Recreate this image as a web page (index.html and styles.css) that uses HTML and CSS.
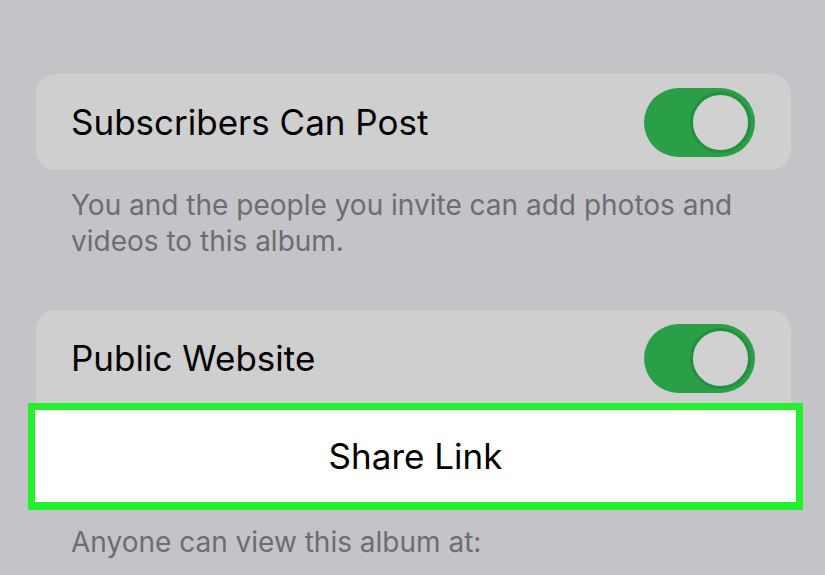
FILE: index.html
```html
<!DOCTYPE html>
<html lang="en">
  <head>
    <meta charset="UTF-8" />
    <meta name="viewport" content="width=device-width, initial-scale=1.0" />
    <title>Shared Album</title>
    <link rel="stylesheet" href="styles.css">
  </head>
  <body>
    <div class="grupo">
      <div class="linha">
        <span>Subscribers Can Post</span>
        <div class="chave"><div class="bolinha"></div></div>
      </div>
    </div>
    <p class="nota">You and the people you invite can add photos and videos to this album.</p>

    <div class="grupo grupo-site">
      <div class="linha">
        <span>Public Website</span>
        <div class="chave"><div class="bolinha"></div></div>
      </div>
      <div class="destaque">Share Link</div>
    </div>
    <p class="nota">Anyone can view this album at:</p>
  </body>
</html>
```

FILE: styles.css
```css
* {
  margin: 0;
  padding: 0;
  box-sizing: border-box;
}

body {
  background-color: #c4c3c8;
  font-family: Inter, "Liberation Sans", sans-serif;
  color: black;
  padding: 74px 34px 0 36px;
  height: 575px;
  overflow: hidden;
}

.grupo {
  background-color: #cfcfcf;
  border-radius: 20px;
}

.linha {
  height: 96px;
  display: flex;
  align-items: center;
  justify-content: space-between;
  padding: 0 36px 0 35px;
  font-size: 35px;
}

.chave {
  width: 111px;
  height: 69px;
  border-radius: 35px;
  background-color: #2b9e48;
  display: flex;
  align-items: center;
  justify-content: flex-end;
  padding-right: 4px;
}

.bolinha {
  width: 61px;
  height: 61px;
  border-radius: 50%;
  background-color: #d1d1d1;
  border: 3px solid #22903e;
}

.nota {
  color: #6d6d72;
  font-size: 28px;
  line-height: 36px;
  padding: 17px 30px 0 35px;
}

.grupo-site {
  margin-top: 51px;
}

/* a faixa verde fica por cima do fim da primeira linha */
.destaque {
  margin: -3px -12px 0 -8px;
  height: 107px;
  background-color: white;
  border: 7px solid #22f22e;
  border-bottom-width: 8px;
  display: flex;
  align-items: center;
  justify-content: center;
  font-size: 35px;
}

.grupo-site + .nota {
  padding-top: 14px;
}
```
